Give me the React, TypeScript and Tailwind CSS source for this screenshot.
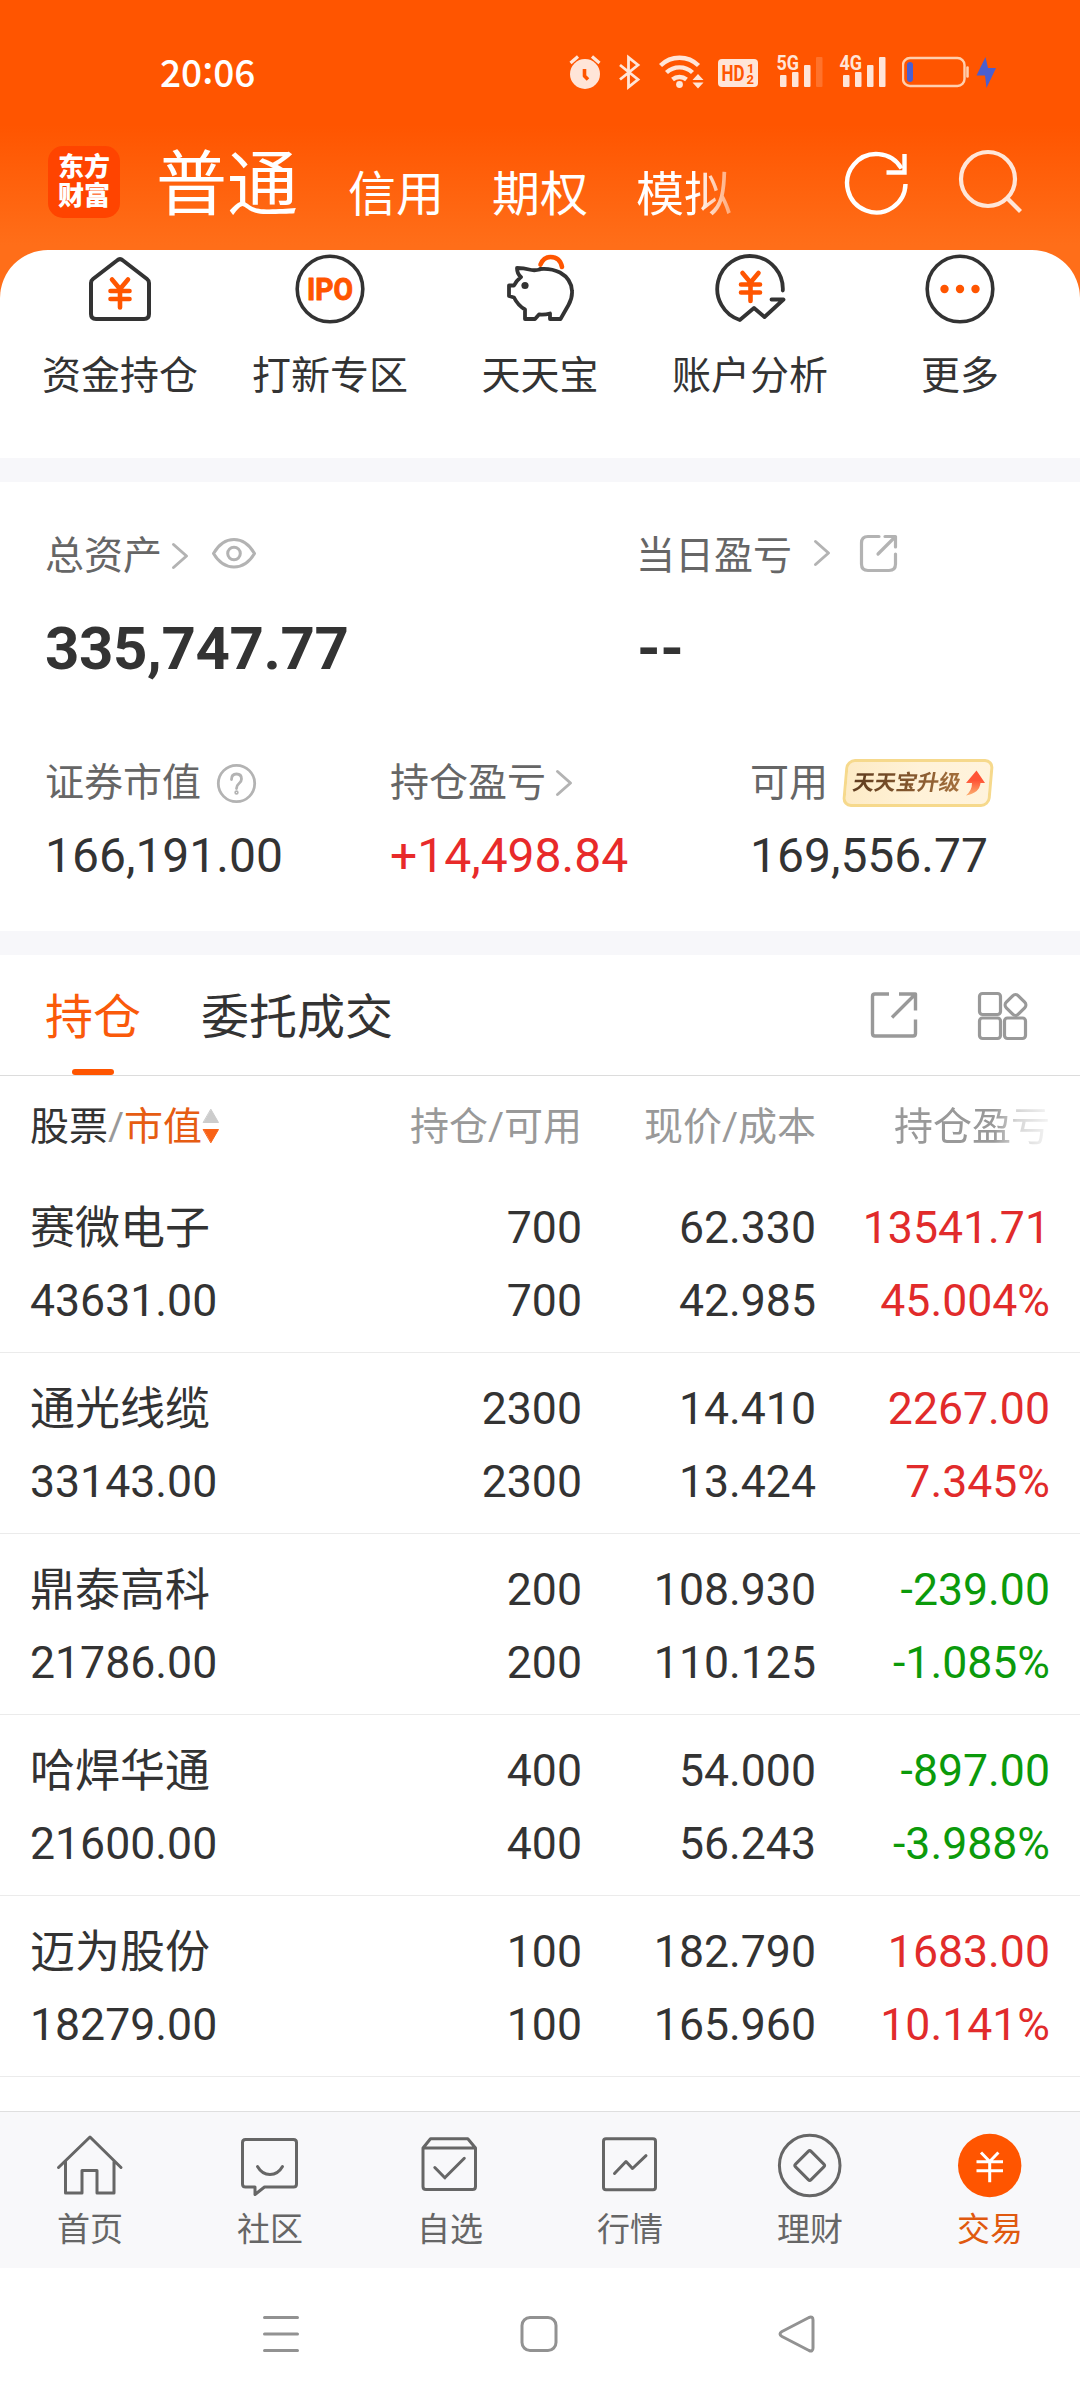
import React from "react";

type IconProps = {
  x: number;
  y: number;
  w: number;
  h: number;
  className?: string;
  stroke?: string;
  sw?: number;
  children: React.ReactNode;
};

// Line icon whose viewBox starts at (x, y), so shapes share one coordinate space.
function Icon({ x, y, w, h, className = "", stroke = "none", sw = 3, children }: IconProps) {
  return (
    <svg
      width={w}
      height={h}
      viewBox={`${x} ${y} ${w} ${h}`}
      fill="none"
      stroke={stroke}
      strokeWidth={sw}
      strokeLinecap="round"
      strokeLinejoin="round"
      className={`block shrink-0 ${className}`}
    >
      {children}
    </svg>
  );
}

const CREAM = "#ffe5d8";
const DARK = "#333333";
const ORANGE = "#ff5500";
const GREY = "#666666";

function StatusBar() {
  return (
    <div className="flex h-[144px] items-center pl-[160px] pr-[84px] text-white">
      <div className="-mt-[2px] flex text-[37px] font-medium leading-[40px] font-['Noto_Sans_CJK_SC',sans-serif]">
        <span>20</span>
        <span className="relative -top-[3px]">:</span>
        <span>06</span>
      </div>
      <div className="ml-auto flex items-center">
        <Icon x={569} y={54} w={32} h={36}>
          <circle cx="585" cy="74" r="15" fill={CREAM} />
          <path d="M570.5 63l7.500-6.500M599.500 63l-7.500-6.500" stroke={CREAM} strokeWidth="3.200" strokeLinecap="butt" />
          <path d="M584.500 69v7l3.500 3.500" stroke={ORANGE} strokeWidth="3.600" strokeLinecap="butt" />
        </Icon>
        <Icon x={619} y={54} w={22} h={36} className="ml-[18px]" stroke={CREAM} sw={2.8}>
          <path d="M620 65l18 14.500-9.500 7.500V57.500l9.500 7.500-18 14.500" strokeLinejoin="miter" strokeLinecap="butt" />
        </Icon>
        <Icon x={659} y={54} w={45} h={36} className="ml-[18px]" stroke={CREAM} sw={4.4}>
          <path d="M660.500 65.500a27 27 0 0 1 38 0M666.500 72.500a19 19 0 0 1 26 0M672.500 79.500a11 11 0 0 1 14 0" strokeLinecap="butt" />
          <circle cx="679.500" cy="84.500" r="3.400" fill={CREAM} stroke="none" />
          <path d="M698 74l5.500 6h-11zM698 88.500l5.500-6h-11z" fill={CREAM} stroke="none" />
        </Icon>
        <Icon x={718} y={54} w={40} h={36} className="ml-[14px]">
          <rect x="718" y="59" width="40" height="28" rx="4" fill={CREAM} />
          <text x="721.500" y="81" fontSize="22.500" fontWeight="700" fill={ORANGE} fontFamily="Roboto" textLength="23" lengthAdjust="spacingAndGlyphs">HD</text>
          <text x="747" y="72.500" fontSize="13" fontWeight="700" fill={ORANGE} fontFamily="Roboto">1</text>
          <text x="746.500" y="84" fontSize="13" fontWeight="700" fill={ORANGE} fontFamily="Roboto">2</text>
        </Icon>
        {["5G", "4G"].map((label, i) => (
          <Icon key={label} x={773} y={46} w={52} h={52} className={i === 0 ? "ml-[15px]" : "ml-[11px]"}>
            <text x="776.500" y="70.300" fontSize="21" fontWeight="700" fill={CREAM} fontFamily="Roboto" textLength="22.500" lengthAdjust="spacingAndGlyphs">{label}</text>
            <rect x="780" y="75" width="6.500" height="12" rx="1" fill={CREAM} />
            <rect x="792" y="72" width="6.500" height="15" rx="1" fill={CREAM} />
            <rect x="804" y="65" width="6.500" height="22" rx="1" fill={CREAM} />
            <rect x="816" y="57" width="6.500" height="30" rx="1" fill={CREAM} opacity={i === 0 ? 0.2 : 1} />
          </Icon>
        ))}
        <Icon x={902} y={54} w={68} h={36} className="ml-[14px]">
          <rect x="903" y="58" width="61.500" height="28" rx="7" stroke="#ffcfae" strokeWidth="2.400" />
          <rect x="907" y="62" width="6" height="20" rx="3" fill="#4a5fd0" />
          <path d="M967.500 67.500v9" stroke="#ffcfae" strokeWidth="2.600" />
        </Icon>
        <Icon x={976} y={54} w={20} h={36} className="ml-[6px]">
          <path d="M985.500 57l-9 18.500h8.500l1.500 12.500 9.500-20h-8z" fill="#4a5fd0" />
        </Icon>
      </div>
    </div>
  );
}

function NavBar() {
  return (
    <div className="flex h-[106px] items-start pl-12 text-white">
      <div className="mt-[2px] flex size-[72px] flex-col items-center justify-center rounded-[15px] bg-[#ff4400] text-[26px] font-black leading-[29px]">
        <span>东方</span>
        <span>财富</span>
      </div>
      <div className="ml-9 mt-[5px] w-[144px] text-[71px] leading-[72px]">普通</div>
      <div className="ml-12 mt-[27px] text-[48px] leading-[48px]">信用</div>
      <div className="ml-12 mt-[27px] text-[48px] leading-[48px]">期权</div>
      <div className="ml-12 mt-[27px] text-[48px] leading-[48px] [mask-image:linear-gradient(to_right,#000_62%,rgba(0,0,0,0.45)_98%)]">模拟</div>
      <Icon x={843} y={150} w={66} h={66} className="ml-[112px] mt-[6px]" stroke="#fff" sw={4.4}>
        <path d="M904.500 184a29.200 29.200 0 1 1-4-15.500" strokeLinecap="butt" />
        <path d="M903.500 154v18.500H885.500" strokeLinecap="butt" strokeLinejoin="miter" />
      </Icon>
      <Icon x={956} y={148} w={66} h={66} className="ml-[47px] mt-[4px]" stroke="#ffe6d8" sw={4.2}>
        <circle cx="987" cy="179" r="27" />
        <path d="M1006.500 198.500l13 13" strokeLinecap="butt" />
      </Icon>
    </div>
  );
}

function Yen({ cx, y }: { cx: number; y: number }) {
  return (
    <path
      d={`M${cx - 8} ${y}l8 9.500l8 -9.500M${cx - 9.5} ${y + 11.500}h19M${cx - 9.5} ${y + 19.500}h19M${cx} ${y + 10}v18`}
      stroke={ORANGE}
      strokeWidth="4.600"
    />
  );
}

const shortcuts = [
  {
    label: "资金持仓",
    icon: (
      <Icon x={84} y={253} w={72} h={72} stroke={DARK} sw={4}>
        <path d="M117 260.500q3-2.600 6 0l24 18.500q2 1.500 2 4v31q0 5-5 5H96q-5 0-5-5v-31q0-2.500 2-4z" />
        <Yen cx={120} y={279.5} />
      </Icon>
    ),
  },
  {
    label: "打新专区",
    icon: (
      <Icon x={294} y={253} w={72} h={72} stroke={DARK} sw={3.6}>
        <circle cx="330" cy="289" r="32.800" />
        <text x="307" y="300" fontSize="31" fontWeight="700" fill={ORANGE} stroke={ORANGE} strokeWidth="1" fontFamily="Roboto" textLength="46" lengthAdjust="spacingAndGlyphs">IPO</text>
      </Icon>
    ),
  },
  {
    label: "天天宝",
    icon: (
      <Icon x={504} y={253} w={72} h={72} stroke={DARK} sw={3.8}>
        <path d="M540 269.500q-6 1.500-11 0-5-1.500-12-1.500 0 6 4 9-5 4-7 8.500h-5V296l5 1.500q4 8 11 12v9.500h10l4-4.500q6 .500 11-1v5.500h10.500l8-14q4-7 3.500-14-.500-12-12-18.500-9-4.500-20-3.500z" />
        <circle cx="525" cy="285.500" r="3.600" fill={DARK} stroke="none" />
        <path d="M540.500 264.500q3-7.500 10-7.500 9.500 0 11.500 10" stroke={ORANGE} strokeWidth="4.600" />
      </Icon>
    ),
  },
  {
    label: "账户分析",
    icon: (
      <Icon x={714} y={253} w={72} h={72} stroke={DARK} sw={3.8}>
        <path d="M782.800 290.500a32.800 32.800 0 1 0-43 29.500l14.200-12 10.500 9 19-17.500h-12" />
        <Yen cx={750.5} y={273} />
      </Icon>
    ),
  },
  {
    label: "更多",
    icon: (
      <Icon x={924} y={253} w={72} h={72} stroke={DARK} sw={3.6}>
        <circle cx="960" cy="289" r="32.800" />
        <g fill={ORANGE} stroke="none">
          <circle cx="944.500" cy="289" r="4.200" />
          <circle cx="960" cy="289" r="4.200" />
          <circle cx="975.500" cy="289" r="4.200" />
        </g>
      </Icon>
    ),
  },
];

function Shortcuts() {
  return (
    <div className="grid h-[208px] grid-cols-5 rounded-t-[48px] bg-white px-[15px] pt-[3px]">
      {shortcuts.map((s) => (
        <div key={s.label} className="flex flex-col items-center">
          {s.icon}
          <span className="mt-[27px] text-[39px] leading-[48px] text-[#333]">{s.label}</span>
        </div>
      ))}
    </div>
  );
}

function Chevron({ className = "" }: { className?: string }) {
  return (
    <Icon x={0} y={0} w={18} h={28} className={className} stroke="#b3b3b3" sw={3}>
      <path d="M2.500 2.500L15.500 14 2.500 25.500" />
    </Icon>
  );
}

function UpgradeBadge() {
  return (
    <div className="relative ml-[14px] flex h-12 w-[152px] items-center pl-[11px]">
      <div className="absolute inset-x-[2px] inset-y-0 -skew-x-[5deg] rounded-[9px] border-[3px] border-[#f6d98c] bg-linear-to-r from-[#fdebc6] via-[#fff2d8] to-[#fff3dc]" />
      <span className="relative -skew-x-[10deg] bg-linear-to-r from-[#5f3c1f] to-[#a5703c] bg-clip-text text-[21.5px] font-bold leading-[30px] text-transparent">
        天天宝升级
      </span>
      <Icon x={965} y={769} w={20} h={26} className="relative ml-[4px]">
        <defs>
          <linearGradient id="rise" x1="0" y1="0" x2="0" y2="1">
            <stop offset="0.400" stopColor="#ff5436" />
            <stop offset="1" stopColor="#fbb070" />
          </linearGradient>
        </defs>
        <path d="M976.500 769.500l8.500 12.500h-4.500q-1 10-14.500 12.500 6-5 6-12.500h-6z" fill="url(#rise)" />
      </Icon>
    </div>
  );
}

function Assets() {
  return (
    <div className="h-[449px] bg-white text-[#333]">
      <div className="mt-[50px] flex h-[48px]">
        <div className="flex w-[636px] items-center pl-[45px] text-[39px] leading-[48px] text-[#666]">
          总资产
          <Chevron className="ml-[9px]" />
          <Icon x={210} y={535} w={48} h={35} className="-mt-[6px] ml-[21px]" stroke="#b3b3b3" sw={3}>
            <path d="M213.500 552.500q8-14 20.500-14t20.500 14q-8 13.500-20.500 13.500t-20.500-13.500z" />
            <circle cx="234" cy="552.500" r="6.300" />
          </Icon>
        </div>
        <div className="flex items-center text-[39px] leading-[48px] text-[#666]">
          当日盈亏
          <Chevron className="-mt-[6px] ml-[21px]" />
          <Icon x={859} y={534} w={40} h={40} className="-mt-[4px] ml-[28px]" stroke="#b3b3b3" sw={3.2}>
            <path d="M879 536.500h-11q-6.500 0-6.500 6.500v21q0 6.500 6.500 6.500h21q6.500 0 6.500-6.500v-10M885 536.500h10.500v10.500M895 537l-17 17" />
          </Icon>
        </div>
      </div>
      <div className="mt-[34px] flex text-[60px] font-bold leading-[70px] tracking-[-0.4px]">
        <span className="w-[637px] pl-[45px]">335,747.77</span>
        <span>--</span>
      </div>
      <div className="mt-[74px] flex">
        <div className="w-[390px] pl-[45px]">
          <div className="flex h-[50px] items-center text-[39px] text-[#666]">
            证券市值
            <Icon x={216} y={763} w={41} h={41} className="ml-[15px]" stroke="#b3b3b3" sw={2.8}>
              <circle cx="236.500" cy="783.500" r="18.200" />
              <path d="M231.500 779.500q0-5.500 5-5.500t5 5q0 2.500-2.500 4.500t-2.500 5" />
              <circle cx="236.500" cy="792.500" r="0.800" />
            </Icon>
          </div>
          <div className="mt-[18px] text-[48px] leading-[60px]">166,191.00</div>
        </div>
        <div className="w-[360px]">
          <div className="flex h-[50px] items-center text-[39px] text-[#666]">
            持仓盈亏
            <Chevron className="ml-[9px]" />
          </div>
          <div className="mt-[18px] text-[48px] leading-[60px] text-[#e82a2a]">+14,498.84</div>
        </div>
        <div>
          <div className="flex h-[50px] items-center text-[39px] text-[#666]">
            可用
            <UpgradeBadge />
          </div>
          <div className="mt-[18px] text-[48px] leading-[60px]">169,556.77</div>
        </div>
      </div>
    </div>
  );
}

function PositionTabs() {
  return (
    <div className="flex h-[121px] border-b border-[#dcdcdc] bg-white pl-[45px] text-[48px] leading-[126px] text-[#333]">
      <div className="relative text-[#fa5a0a]">
        持仓
        <div className="absolute bottom-0 left-[27px] h-[6px] w-[42px] rounded-full bg-[#ff5500]" />
      </div>
      <div className="ml-[60px]">委托成交</div>
      <Icon x={869} y={990} w={50} h={50} className="ml-auto mt-[35px]" stroke="#999" sw={3.4}>
        <path d="M889 994h-14q-2.500 0-2.500 2.500v37q0 2.500 2.500 2.500h38q2.500 0 2.500-2.500v-14M899 994h16.500v16.500M915 994.500l-23 23" strokeLinecap="butt" />
      </Icon>
      <Icon x={976} y={990} w={53} h={52} className="ml-[57px] mr-[51px] mt-[35px]" stroke="#999" sw={3.2}>
        <rect x="979.500" y="993.500" width="21" height="21" rx="3" />
        <rect x="979.500" y="1018" width="21" height="20.500" rx="3" />
        <rect x="1004.500" y="1018" width="21" height="20.500" rx="3" />
        <rect x="1007" y="996.500" width="17" height="17" rx="4" transform="rotate(45 1015.500 1005)" />
      </Icon>
    </div>
  );
}

const columns = "grid grid-cols-[210px_342px_234px_234px] px-[30px]";

type Position = { name: string; value: string; held: string; price: string; cost: string; profit: string; rate: string };

const positions: Position[] = [
  { name: "赛微电子", value: "43631.00", held: "700", price: "62.330", cost: "42.985", profit: "13541.71", rate: "45.004%" },
  { name: "通光线缆", value: "33143.00", held: "2300", price: "14.410", cost: "13.424", profit: "2267.00", rate: "7.345%" },
  { name: "鼎泰高科", value: "21786.00", held: "200", price: "108.930", cost: "110.125", profit: "-239.00", rate: "-1.085%" },
  { name: "哈焊华通", value: "21600.00", held: "400", price: "54.000", cost: "56.243", profit: "-897.00", rate: "-3.988%" },
  { name: "迈为股份", value: "18279.00", held: "100", price: "182.790", cost: "165.960", profit: "1683.00", rate: "10.141%" },
];

function PositionTable() {
  return (
    <div className="h-[1035px] bg-white">
      <div className={`${columns} h-24 items-center pt-[5px] text-right text-[39px] leading-[48px] text-[#999]`}>
        <div className="flex items-center text-[#333]">
          股票<span className="text-[#999]">/</span>
          <span className="text-[#e65c12]">市值</span>
          <Icon x={202} y={1108} w={18} h={36} className="-mt-[2px]">
            <path d="M211 1109.500l7.500 13h-15z" fill="#ccc" stroke="#ccc" strokeWidth="1" />
            <path d="M211 1142.500l7.500-13h-15z" fill="#f96216" stroke="#f96216" strokeWidth="1" />
          </Icon>
        </div>
        <div>持仓/可用</div>
        <div>现价/成本</div>
        <div className="[mask-image:linear-gradient(to_right,#000_76%,rgba(0,0,0,0.4)_86%,rgba(0,0,0,0.1)_100%)]">持仓盈亏</div>
      </div>
      {positions.map((p) => (
        <div key={p.name} className={`${columns} h-[181px] border-b border-[#ebebeb] pt-[20px] text-right text-[44.6px] leading-[73px] text-[#333]`}>
          <div className="text-left">
            <div className="text-[45px]">{p.name}</div>
            <div>{p.value}</div>
          </div>
          <div>
            <div>{p.held}</div>
            <div>{p.held}</div>
          </div>
          <div>
            <div>{p.price}</div>
            <div>{p.cost}</div>
          </div>
          <div className={p.profit.startsWith("-") ? "text-[#0b9a0b]" : "text-[#e12b2b]"}>
            <div>{p.profit}</div>
            <div>{p.rate}</div>
          </div>
        </div>
      ))}
    </div>
  );
}

const menu = [
  {
    label: "首页",
    icon: (
      <Icon x={54} y={2130} w={72} h={72} stroke={GREY} sw={3}>
        <path d="M58.500 2167.500L90 2137l31 30.500M65.500 2161.500v31.500H82v-22.500h15V2193h17v-31.500" />
      </Icon>
    ),
  },
  {
    label: "社区",
    icon: (
      <Icon x={234} y={2130} w={72} h={72} stroke={GREY} sw={3}>
        <path d="M245.500 2139.500h48q3 0 3 3V2184q0 3-3 3h-29l-9.500 7.500v-7.500h-9.500q-3 0-3-3v-41.500q0-3 3-3z" />
        <path d="M257.500 2166.500q4.500 8 12.500 8t12.500-8" />
      </Icon>
    ),
  },
  {
    label: "自选",
    icon: (
      <Icon x={414} y={2130} w={72} h={72} stroke={GREY} sw={3}>
        <path d="M423 2148l7.500-9.300h37.300l7.700 9.300v38.500q0 3-3 3H426q-3 0-3-3zM423 2148h52.500" />
        <path d="M434.800 2167.500l10 10.300 19.500-19.500" />
      </Icon>
    ),
  },
  {
    label: "行情",
    icon: (
      <Icon x={594} y={2130} w={72} h={72} stroke={GREY} sw={3}>
        <rect x="603.500" y="2138.700" width="52" height="51" rx="2.500" />
        <path d="M614.500 2173.500l11.500-12 6.500 7 13.500-12.800" />
      </Icon>
    ),
  },
  {
    label: "理财",
    icon: (
      <Icon x={774} y={2130} w={72} h={72} stroke={GREY} sw={3}>
        <circle cx="809.700" cy="2165.500" r="30.300" />
        <rect x="798.700" y="2154.500" width="22" height="22" rx="2" transform="rotate(45 809.700 2165.500)" />
      </Icon>
    ),
  },
  {
    label: "交易",
    active: true,
    icon: (
      <Icon x={954} y={2130} w={72} h={72} stroke="#fff" sw={3}>
        <circle cx="989.700" cy="2165.500" r="31.700" fill={ORANGE} stroke="none" />
        <path d="M981 2152.500l8.700 9 8.700-9M976.500 2161.700h26.500M976.500 2170.700h26.500M989.700 2161.700v20.500" strokeLinecap="butt" />
      </Icon>
    ),
  },
];

function BottomMenu() {
  return (
    <div className="grid h-[157px] grid-cols-6 border-t border-[#dfdfdf] bg-[#f8f8fa]">
      {menu.map((m) => (
        <div key={m.label} className="flex flex-col items-center pt-[18px]">
          {m.icon}
          <span className={`mt-[8px] text-[33px] leading-[40px] ${m.active ? "text-[#e0590f]" : "text-[#666]"}`}>{m.label}</span>
        </div>
      ))}
    </div>
  );
}

function SystemNav() {
  return (
    <div className="flex h-[132px] items-center justify-between pl-[262px] pr-[264px]">
      <Icon x={0} y={0} w={38} h={38} stroke="#929292" sw={3}>
        <path d="M2.500 2.500h33M2.500 19h33M2.500 35.500h33" />
      </Icon>
      <Icon x={0} y={0} w={38} h={38} stroke="#929292" sw={3}>
        <rect x="2" y="2.500" width="34" height="33" rx="8" />
      </Icon>
      <Icon x={0} y={0} w={38} h={38} stroke="#929292" sw={3}>
        <path d="M4 16.500L31 2.500q4-1.500 4 2.500v28q0 4-4 2.500l-27-14q-4-2.500 0-5z" />
      </Icon>
    </div>
  );
}

export default function App() {
  return (
    <div className="flex h-[2400px] w-[1080px] flex-col overflow-hidden bg-white font-['Roboto','Noto_Sans_CJK_SC',sans-serif]">
      <div className="bg-[linear-gradient(to_bottom,#ff5500_0px,#ff5500_125px,#ff6e19_245px)]">
        <StatusBar />
        <NavBar />
        <Shortcuts />
      </div>
      <div className="h-6 bg-[#f7f7fa]" />
      <Assets />
      <div className="h-6 bg-[#f7f7fa]" />
      <PositionTabs />
      <PositionTable />
      <BottomMenu />
      <SystemNav />
    </div>
  );
}
